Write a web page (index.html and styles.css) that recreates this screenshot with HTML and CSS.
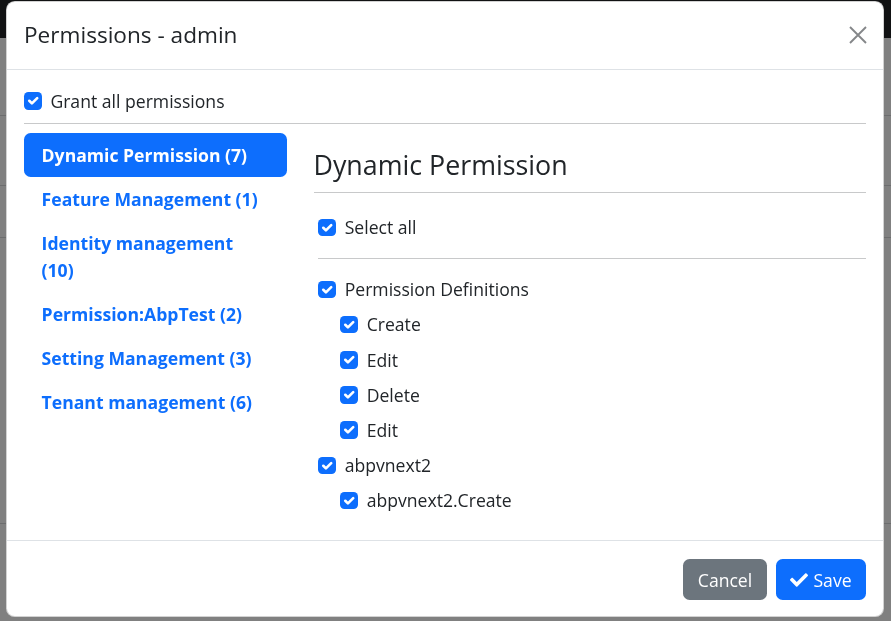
FILE: index.html
```html
<!DOCTYPE html>
<html lang="en">
<head>
<meta charset="utf-8">
<title>Permissions - admin</title>
<link rel="stylesheet" href="styles.css">
</head>
<body>
<div class="page">
  <div class="page-top"></div>
  <div class="page-row r1"></div>
  <div class="page-row r2"></div>
  <div class="page-row r3"></div>
  <div class="page-row r4"></div>
</div>

<div class="modal">
  <div class="modal-header">
    <h5 class="modal-title">Permissions - admin</h5>
    <button class="btn-close" type="button" aria-label="Close">
      <svg viewBox="0 0 18 18" width="18" height="18"><path d="M1 1L17 17M17 1L1 17" stroke="#212529" stroke-width="1.9" fill="none"/></svg>
    </button>
  </div>
  <div class="modal-body">
    <label class="check"><span class="box"><svg viewBox="0 0 20 20"><path d="m6 10 3 3 6-6" fill="none" stroke="#fff" stroke-width="3" stroke-linecap="round" stroke-linejoin="round"/></svg></span>Grant all permissions</label>
    <hr class="rule grant-rule">
    <div class="perm-row">
      <nav class="nav">
        <a class="nav-link active">Dynamic Permission (7)</a>
        <a class="nav-link">Feature Management (1)</a>
        <a class="nav-link">Identity management (10)</a>
        <a class="nav-link">Permission:AbpTest (2)</a>
        <a class="nav-link">Setting Management (3)</a>
        <a class="nav-link">Tenant management (6)</a>
      </nav>
      <div class="perm-content">
        <h4 class="group-title">Dynamic Permission</h4>
        <hr class="rule title-rule">
        <div class="tree">
          <label class="check"><span class="box"><svg viewBox="0 0 20 20"><path d="m6 10 3 3 6-6" fill="none" stroke="#fff" stroke-width="3" stroke-linecap="round" stroke-linejoin="round"/></svg></span>Select all</label>
          <hr class="rule select-rule">
          <label class="check item"><span class="box"><svg viewBox="0 0 20 20"><path d="m6 10 3 3 6-6" fill="none" stroke="#fff" stroke-width="3" stroke-linecap="round" stroke-linejoin="round"/></svg></span>Permission Definitions</label>
          <label class="check item child"><span class="box"><svg viewBox="0 0 20 20"><path d="m6 10 3 3 6-6" fill="none" stroke="#fff" stroke-width="3" stroke-linecap="round" stroke-linejoin="round"/></svg></span>Create</label>
          <label class="check item child"><span class="box"><svg viewBox="0 0 20 20"><path d="m6 10 3 3 6-6" fill="none" stroke="#fff" stroke-width="3" stroke-linecap="round" stroke-linejoin="round"/></svg></span>Edit</label>
          <label class="check item child"><span class="box"><svg viewBox="0 0 20 20"><path d="m6 10 3 3 6-6" fill="none" stroke="#fff" stroke-width="3" stroke-linecap="round" stroke-linejoin="round"/></svg></span>Delete</label>
          <label class="check item child"><span class="box"><svg viewBox="0 0 20 20"><path d="m6 10 3 3 6-6" fill="none" stroke="#fff" stroke-width="3" stroke-linecap="round" stroke-linejoin="round"/></svg></span>Edit</label>
          <label class="check item"><span class="box"><svg viewBox="0 0 20 20"><path d="m6 10 3 3 6-6" fill="none" stroke="#fff" stroke-width="3" stroke-linecap="round" stroke-linejoin="round"/></svg></span>abpvnext2</label>
          <label class="check item child"><span class="box"><svg viewBox="0 0 20 20"><path d="m6 10 3 3 6-6" fill="none" stroke="#fff" stroke-width="3" stroke-linecap="round" stroke-linejoin="round"/></svg></span>abpvnext2.Create</label>
        </div>
      </div>
    </div>
  </div>
  <div class="modal-footer">
    <button class="btn btn-cancel" type="button">Cancel</button>
    <button class="btn btn-save" type="button"><svg viewBox="0 0 512 512" width="18" height="18"><path fill="#fff" d="M173.898 439.404l-166.4-166.4c-9.997-9.997-9.997-26.206 0-36.204l36.203-36.204c9.997-9.998 26.207-9.998 36.204 0L192 312.69 432.095 72.596c9.997-9.997 26.207-9.997 36.204 0l36.203 36.204c9.997 9.997 9.997 26.206 0 36.204l-294.4 294.401c-9.998 9.997-26.207 9.997-36.204-.001z"/></svg>Save</button>
  </div>
</div>
</body>
</html>
```
FILE: styles.css
```css
* { box-sizing: border-box; }

body {
  margin: 0;
  font-family: "Open Sans", "Noto Sans", sans-serif;
  font-size: 17.6px;
  line-height: 1.5;
  color: #212529;
  background: #808080;
}

/* page behind the backdrop */
.page { height: 621px; overflow: hidden; }
.page-top { height: 38px; background: #111213; }
.page-row { border-bottom: 1px solid #6c6d6e; }
.r1 { height: 78px; }
.r2 { height: 70px; }
.r3 { height: 52px; }
.r4 { height: 286px; }

/* modal */
.modal {
  position: fixed;
  top: 1px;
  left: 6px;
  width: 878px;
  height: 616px;
  background: #fff;
  border: 1px solid rgba(0, 0, 0, .175);
  border-radius: 8.8px;
  display: flex;
  flex-direction: column;
  overflow: hidden;
}

.modal-header {
  display: flex;
  align-items: center;
  justify-content: space-between;
  padding: 15.8px 17px 18.5px;
  border-bottom: 1px solid #dee2e6;
}

.modal-title {
  margin: 0;
  font-size: 22.6px;
  font-weight: 400;
  line-height: 33px;
}

.btn-close {
  border: 0;
  background: transparent;
  padding: 0;
  width: 18px;
  height: 18px;
  margin: 2px -1px 0 0;
  opacity: .55;
  display: flex;
}

.modal-body {
  flex: 1;
  padding: 17.6px 17px;
}

.check {
  display: flex;
  align-items: flex-start;
  line-height: 26.4px;
}

.box {
  flex: none;
  width: 17.6px;
  height: 17.6px;
  margin-top: 4.4px;
  margin-right: 8.8px;
  border-radius: 4.4px;
  background: #0d6efd;
  display: flex;
}
.box svg { width: 100%; height: 100%; }

.rule {
  border: 0;
  border-top: 1px solid #c8c9ca;
  margin: 0;
}
.grant-rule { margin: 8.7px 0 9.4px; }

.perm-row {
  display: grid;
  grid-template-columns: 263px 1fr;
  column-gap: 26.5px;
}

.nav { display: flex; flex-direction: column; }

.nav-link {
  display: block;
  padding: 8.8px 17.6px;
  font-weight: 700;
  line-height: 26.4px;
  color: #0d6efd;
  border-radius: 6.6px;
}
.nav-link.active { background: #0d6efd; color: #fff; }

.perm-content { padding-top: 16px; }

.group-title {
  margin: 0;
  font-size: 26.8px;
  font-weight: 400;
  line-height: 1.2;
}

.title-rule { margin: 10.6px 0 21px; }

.tree { padding-left: 4.8px; }

.select-rule { margin: 17.8px 0 16.8px; }

.item { margin-bottom: 8.8px; }
.child { padding-left: 22px; }

.modal-footer {
  display: flex;
  justify-content: flex-end;
  gap: 9px;
  padding: 18px 17px 16px;
  border-top: 1px solid #dee2e6;
}

.btn {
  height: 41px;
  border: 0;
  border-radius: 6.6px;
  font-family: inherit;
  font-size: 17.6px;
  color: #fff;
  display: inline-flex;
  align-items: center;
  justify-content: center;
  padding: 0;
}
.btn-cancel { width: 84px; background: #6c757d; }
.btn-save { width: 90px; background: #0d6efd; gap: 5px; }
```
